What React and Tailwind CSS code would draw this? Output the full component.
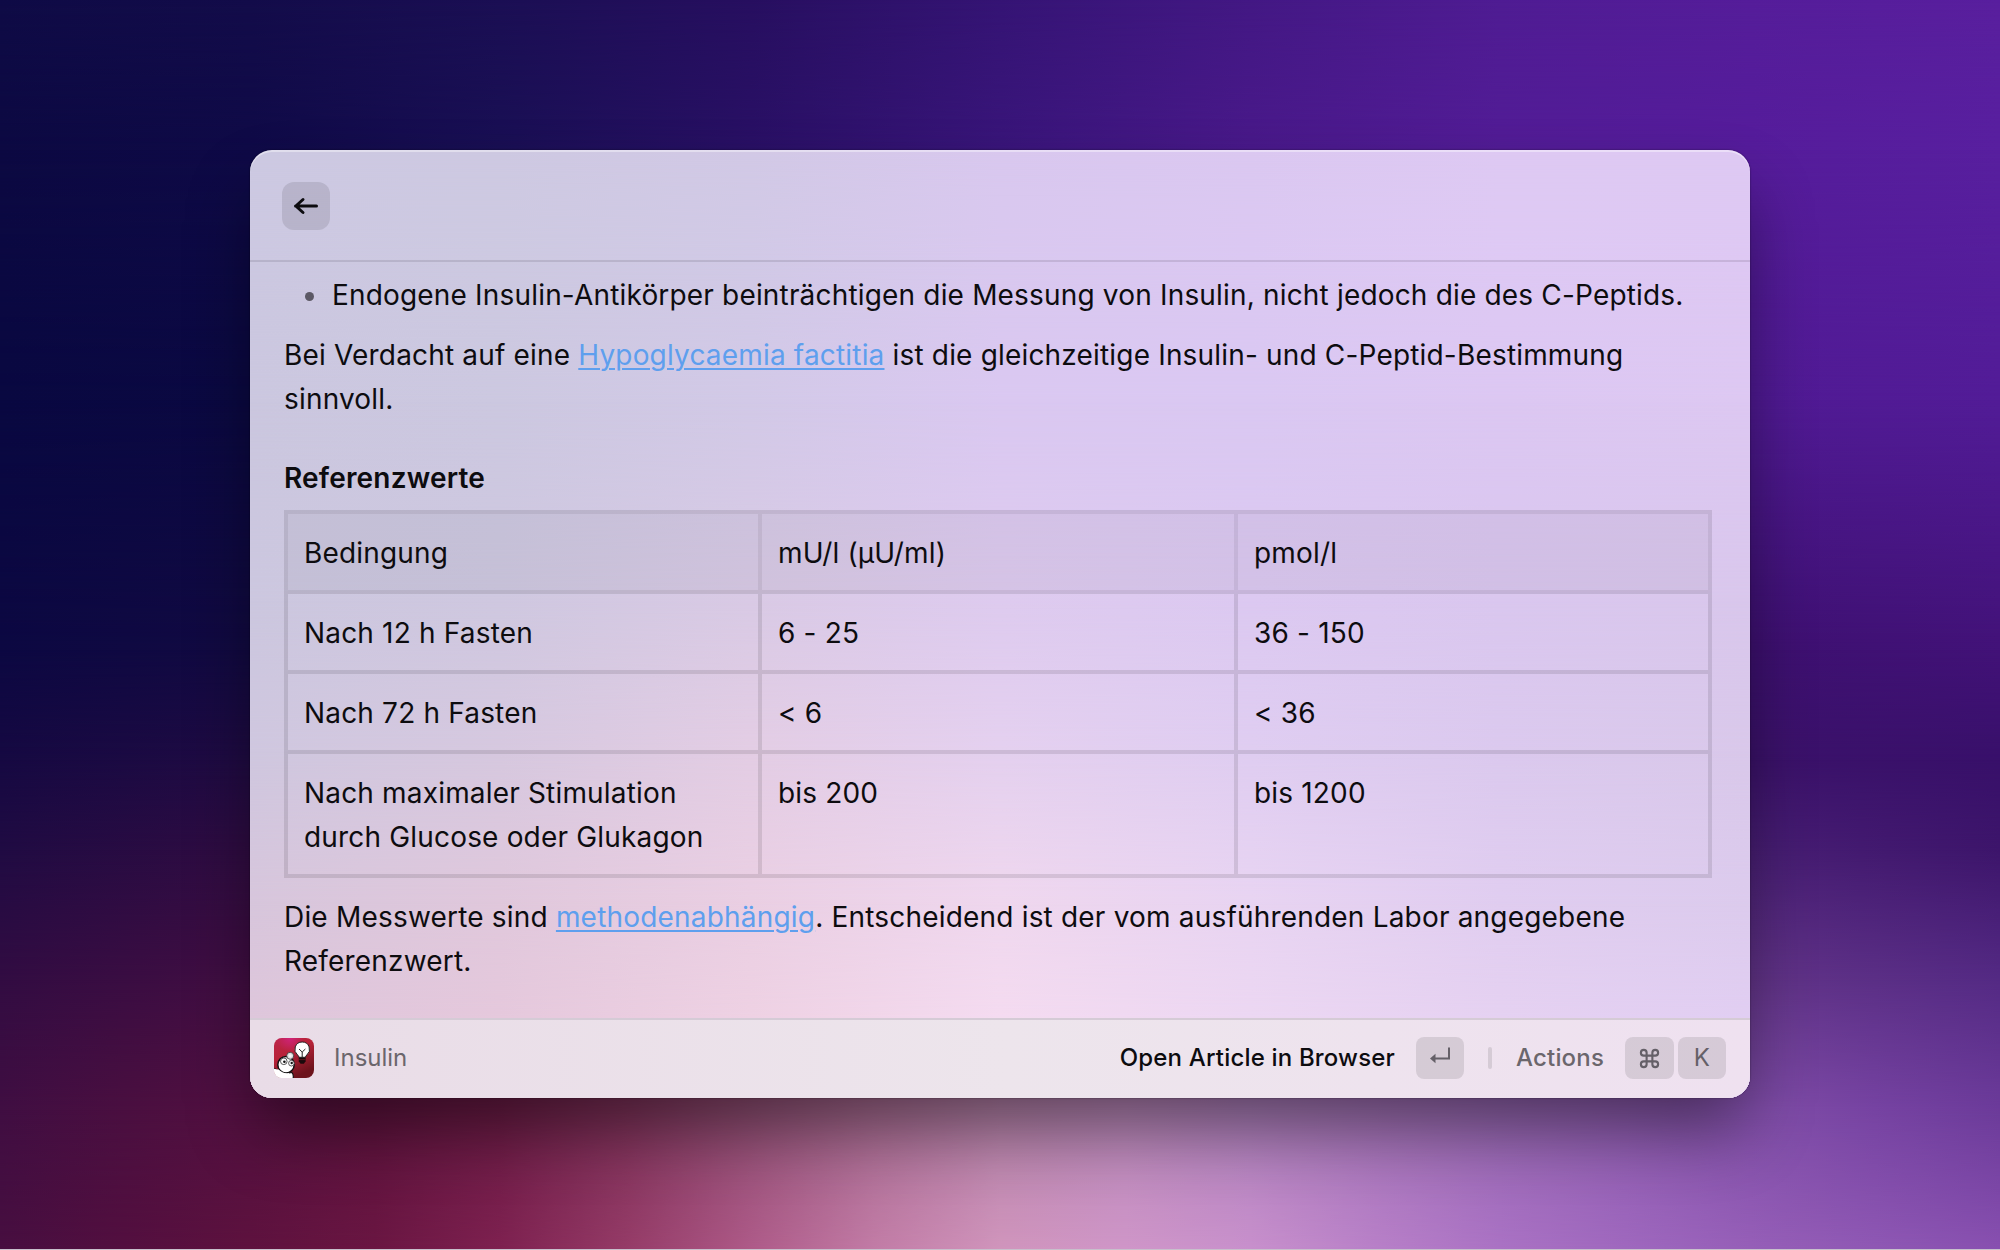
import React from "react";
import { Command } from "lucide-react";

const BG = {
  ys: [0, 150, 400, 650, 760, 850, 980, 1110, 1250],
  rows: [
    ["#0f0b46", "#130c4a", "#1b0f54", "#270f60", "#351475", "#431884", "#4f1c93", "#551d9a", "#591f9e"],
    ["#0c0942", "#0f0a47", "#190f54", "#291065", "#39157a", "#49198a", "#521c96", "#551c9b", "#581f9f"],
    ["#090841", "#0b0942", "#170d50", "#28106a", "#3a147a", "#491a8a", "#501c92", "#501a94", "#521c97"],
    ["#0c0842", "#120a42", "#200c4c", "#30105a", "#3a1268", "#401470", "#3c1270", "#3d1070", "#421278"],
    ["#160942", "#200b43", "#2c0e48", "#401450", "#4c1860", "#481a6a", "#40166a", "#3b126a", "#38106a"],
    ["#200b43", "#300c42", "#401045", "#5a1c54", "#682a68", "#602a70", "#502078", "#481e74", "#3d156b"],
    ["#320c42", "#420e42", "#561442", "#7a3460", "#8a4f80", "#7e4c90", "#6c3c90", "#623488", "#542a84"],
    ["#400e42", "#4a0f40", "#531040", "#5e133e", "#6c1c46", "#7f325a", "#935076", "#a86c92", "#b682aa", "#b886b8", "#ae7fbc", "#a473b8", "#9868b4", "#8e5cb0", "#804ea8", "#7643a2", "#6c3b9a"],
    ["#470e40", "#530f3f", "#5e123e", "#6a1642", "#7e2150", "#953b67", "#ae5a88", "#c27ca6", "#d095bc", "#cf96c8", "#c890cc", "#b880c8", "#aa72c4", "#9f68be", "#965fb8", "#8f58b4", "#8850b0"],
  ],
};

const PANEL = {
  ys: [0, 110, 250, 450, 600, 750, 870, 948],
  rows: [
    ["#cdc9e2", "#cec9e2", "#d2c9e6", "#d9c8ef", "#dbc8f1", "#dec9f3", "#dec9f3"],
    ["#ccc8e1", "#cdc9e1", "#d1c9e6", "#d9c8ef", "#dbc8f2", "#dec9f4", "#dec8f3"],
    ["#cbc7df", "#ccc8e0", "#d2c9e7", "#dac8f1", "#dac8f2", "#dcc7f2", "#ddc8f2"],
    ["#ccc7df", "#cfc8e0", "#d9cae5", "#decbef", "#dcc9f1", "#dac7ef", "#d9c7ec"],
    ["#cfc7df", "#d6c8df", "#e3cde4", "#e4d0ef", "#dfcdf1", "#dbc9ee", "#d9c8ea"],
    ["#d7c6dc", "#e0c8dc", "#eacfe3", "#efd7ee", "#e8d4f2", "#e0cdf0", "#dccbed"],
    ["#dec6db", "#e5c8dc", "#eed1e3", "#f4dbf0", "#ecd7f2", "#e5d1f1", "#e1cef2"],
    ["#dec6db", "#e5c8dc", "#eed1e3", "#f4dbf0", "#ecd7f2", "#e5d1f1", "#e1cef2"],
  ],
};

/* Two-dimensional colour blend: each row fades in over the one above it. */
function Mesh({ ys, rows }) {
  return (
    <div className="pointer-events-none absolute inset-0 overflow-hidden">
      {rows.map((colors, i) => {
        const mask =
          i === 0
            ? undefined
            : `linear-gradient(to bottom, transparent ${ys[i - 1]}px, black ${ys[i]}px)`;
        return (
          <div
            key={i}
            className="absolute inset-0"
            style={{
              backgroundImage: `linear-gradient(to right, ${colors.join(", ")})`,
              maskImage: mask,
              WebkitMaskImage: mask,
            }}
          />
        );
      })}
    </div>
  );
}

const HEAD = ["Bedingung", "mU/l (µU/ml)", "pmol/l"];

const BODY = [
  ["Nach 12 h Fasten", "6 - 25", "36 - 150"],
  ["Nach 72 h Fasten", "< 6", "< 36"],
  ["Nach maximaler Stimulation durch Glucose oder Glukagon", "bis 200", "bis 1200"],
];

function Link({ children }) {
  return (
    <a className="text-[#5e9fee] underline decoration-2 underline-offset-[3px]">{children}</a>
  );
}

function Key({ children }) {
  return (
    <span className="flex h-[42px] min-w-12 items-center justify-center rounded-[8px] bg-black/10 text-[#656068]">
      {children}
    </span>
  );
}

function AppIcon() {
  return (
    <svg className="size-10" viewBox="0 0 40 40">
      <defs>
        <linearGradient id="red" x1="0" y1="0" x2="0.5" y2="1">
          <stop offset="0" stopColor="#bc2448" />
          <stop offset="0.45" stopColor="#b82238" />
          <stop offset="1" stopColor="#6c131c" />
        </linearGradient>
        <radialGradient id="pink" cx="0.4" cy="0" r="0.35">
          <stop offset="0" stopColor="#cf2379" />
          <stop offset="1" stopColor="#cf2379" stopOpacity="0" />
        </radialGradient>
        <clipPath id="tile">
          <rect width="40" height="40" rx="8" />
        </clipPath>
      </defs>
      <g clipPath="url(#tile)">
        <rect width="40" height="40" fill="url(#red)" />
        <rect width="40" height="40" fill="url(#pink)" />
        <path d="M-1 30 Q10 36 18 34.5 Q20 37 19 41 H-1 Z" fill="#fff" stroke="#111" strokeWidth="1.2" />
        <circle cx="12" cy="26.7" r="8.2" fill="#fff" stroke="#111" strokeWidth="1.5" />
        <path d="M-1 30.5 Q2 31 4.6 31.5 Q9 36 15 35 V40.5 H-1 Z" fill="#fff" />
        <circle cx="9.8" cy="23.3" r="3.3" fill="#fff" stroke="#444" strokeWidth="0.9" />
        <circle cx="17.4" cy="25.2" r="2.8" fill="#fff" stroke="#444" strokeWidth="0.9" />
        <circle cx="16.2" cy="17.8" r="3.5" fill="#ddd" stroke="#333" strokeWidth="0.8" />
        <circle cx="16.2" cy="17.8" r="1.6" fill="#f4f4f4" />
        <circle cx="10.4" cy="23.8" r="1.3" fill="#111" />
        <circle cx="17.7" cy="25" r="1.2" fill="#111" />
        <path d="M24.8 18.5 h6.8 v4.7 l-1.7 2.6 h-3.4 l-1.7 -2.6 Z" fill="#1b0a0c" />
        <path d="M25 21.6 h6.4" stroke="#7a1c26" strokeWidth="0.6" />
        <path d="M28.2 4 a7.3 7.3 0 0 1 4.6 13 q-1.2 1.1 -1.4 2.3 h-6.4 q-0.2 -1.2 -1.4 -2.3 A7.3 7.3 0 0 1 28.2 4 Z" fill="#fff" stroke="#222" strokeWidth="1" />
        <path d="M25 11 l3.2 3 l3.2 -3 M28.2 14 v5" fill="none" stroke="#222" strokeWidth="1" />
      </g>
    </svg>
  );
}

export default function App() {
  return (
    <div className="relative flex h-[1250px] w-[2000px] justify-center overflow-hidden pt-[150px] font-['Inter','Liberation_Sans',sans-serif] tracking-[0.175px] text-[#0d0c0f]">
      <Mesh ys={BG.ys} rows={BG.rows} />
      <div className="absolute inset-x-0 bottom-0 h-px bg-[#c8c0cc]" />
      <main className="relative flex h-[948px] w-[1500px] flex-col rounded-[22px] shadow-[0_38px_68px_-6px_rgba(0,0,0,0.45),0_0_2px_rgba(0,0,0,0.5)]">
        <div className="absolute inset-0 overflow-hidden rounded-[22px]">
          <Mesh ys={PANEL.ys} rows={PANEL.rows} />
        </div>
        <header className="relative flex h-28 shrink-0 items-center rounded-t-[22px] border-b-2 border-black/10 px-8 pt-[2px] shadow-[inset_0_2px_0_rgba(255,255,255,0.4)]">
          <button className="flex size-12 items-center justify-center rounded-[12px] bg-black/10">
            <svg className="size-7" viewBox="0 0 28 28" fill="none" stroke="currentColor" strokeWidth="3" strokeLinecap="round" strokeLinejoin="round">
              <path d="M24.5 14 H3.5 M11 7.5 L3.8 14 L11 20.5" />
            </svg>
          </button>
        </header>
        <section className="relative grow px-[34px] pt-[11px] text-[28px] leading-[44px]">
          <ul className="pl-12">
            <li className="relative whitespace-nowrap">
              <span className="absolute top-[19px] -left-[27px] size-[9px] rounded-full bg-[#5c5965]" />
              Endogene Insulin-Antikörper beinträchtigen die Messung von Insulin, nicht jedoch die des C-Peptids.
            </li>
          </ul>
          <p className="mt-4">
            Bei Verdacht auf eine <Link>Hypoglycaemia factitia</Link> ist die gleichzeitige Insulin- und C-Peptid-Bestimmung
            <br />
            sinnvoll.
          </p>
          <h2 className="mt-[35px] font-semibold">Referenzwerte</h2>
          <table className="mt-[10px] w-[1428px] table-fixed border-separate border-spacing-0 border-4 border-black/10">
            <colgroup>
              <col className="w-[474px]" />
              <col className="w-[476px]" />
              <col className="w-[470px]" />
            </colgroup>
            <thead>
              <tr>
                {HEAD.map((cell) => (
                  <th key={cell} className="border-r-4 border-b-4 border-black/10 bg-black/[0.04] bg-clip-padding px-4 pt-[17px] pb-[15px] text-left align-top font-normal last:border-r-0">
                    {cell}
                  </th>
                ))}
              </tr>
            </thead>
            <tbody>
              {BODY.map((row) => (
                <tr key={row[0]} className="group">
                  {row.map((cell) => (
                    <td key={cell} className="border-r-4 border-b-4 border-black/10 px-4 pt-[17px] pb-[15px] align-top last:border-r-0 group-last:border-b-0">
                      {cell}
                    </td>
                  ))}
                </tr>
              ))}
            </tbody>
          </table>
          <p className="mt-[17px] tracking-[0.19px]">
            Die Messwerte sind <Link>methodenabhängig</Link>. Entscheidend ist der vom ausführenden Labor angegebene
            <br />
            Referenzwert.
          </p>
        </section>
        <footer className="relative h-20 shrink-0 overflow-hidden rounded-b-[22px] border-t-2 border-[#d5cbd6] bg-linear-to-r from-[#e9dce7] via-[#ede5ec] to-[#efe1f0]">
          <div className="flex h-full items-center px-6 pb-[2px] text-[24px]">
            <AppIcon />
            <span className="ml-5 tracking-normal text-[#6b666c]">Insulin</span>
            <span className="ml-auto font-medium">Open Article in Browser</span>
            <span className="ml-[21px] flex">
              <Key>
                <svg className="size-6" viewBox="0 0 24 24" fill="none" stroke="currentColor" strokeWidth="2">
                  <path d="M21 1.5 V12.5 H6" />
                  <path d="M2 12.5 L7.5 7.8 V17.2 Z" fill="currentColor" stroke="none" />
                </svg>
              </Key>
            </span>
            <span className="ml-6 h-[22px] w-1 rounded-full bg-black/10" />
            <span className="ml-6 font-medium text-[#6b666c]">Actions</span>
            <span className="ml-[21px] flex gap-1">
              <Key>
                <Command className="mx-[13px] size-[23px]" strokeWidth={2.2} />
              </Key>
              <Key>
                <span className="text-[24px]">K</span>
              </Key>
            </span>
          </div>
        </footer>
      </main>
    </div>
  );
}
